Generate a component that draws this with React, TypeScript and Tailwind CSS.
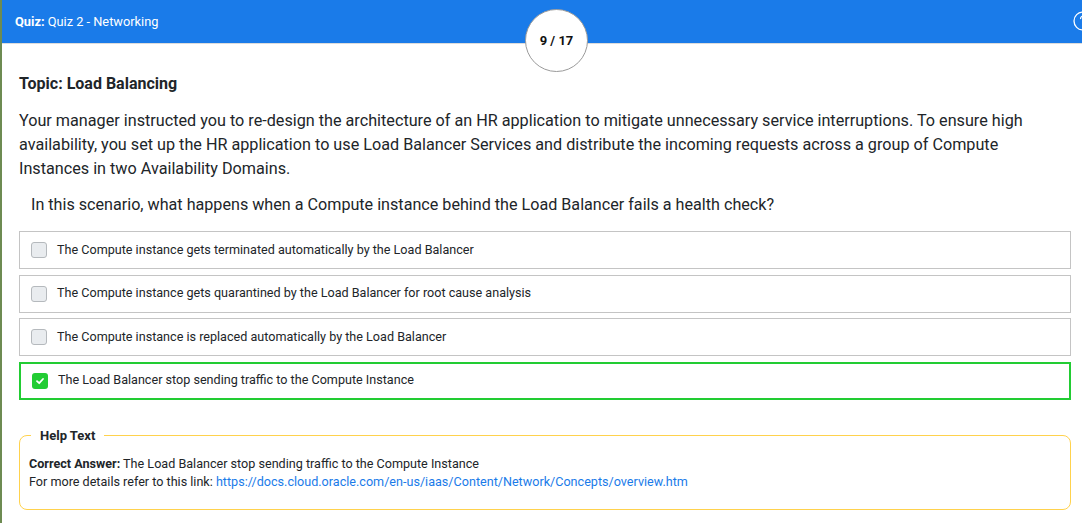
import React from 'react'

const options = [
  { text: 'The Compute instance gets terminated automatically by the Load Balancer', checked: false },
  { text: 'The Compute instance gets quarantined by the Load Balancer for root cause analysis', checked: false },
  { text: 'The Compute instance is replaced automatically by the Load Balancer', checked: false },
  { text: 'The Load Balancer stop sending traffic to the Compute Instance', checked: true },
]

const App: React.FC = () => {
  return (
    <div
      className="h-[523px] w-[1082px] overflow-hidden bg-white border-l-2 border-[#6d8b52] text-[#212529]"
      style={{ fontFamily: 'Roboto, "Liberation Sans", sans-serif' }}
    >
      {/* Header */}
      <div className="relative flex h-[44px] items-center justify-between bg-[#1a7be9] border-b border-[#dcdcdc] pl-[13px] text-[12.8px] text-white">
        <div className="mt-[1px]">
          <span className="font-bold">Quiz:</span> Quiz 2 - Networking
        </div>
        <div className="absolute left-[523px] top-[9px] flex h-[63px] w-[63px] items-center justify-center rounded-full border border-[#9a9a9a] bg-white text-[13px] font-bold text-[#111]">
          9 / 17
        </div>
        <svg className="mr-[-11px] mt-[-1px]" width="20" height="20" viewBox="0 0 20 20" fill="none">
          <circle cx="10" cy="10" r="9" stroke="white" strokeWidth="1.3" />
          <path d="M7.6 7.6 A2.4 2.4 0 1 1 10 10 L10 11.6" stroke="white" strokeWidth="1.3" strokeLinecap="round" />
          <circle cx="10" cy="14.2" r="0.8" fill="white" />
        </svg>
      </div>

      {/* Body */}
      <div className="pl-[17px] pr-[11px]">
        <h2 className="mt-[30px] text-[16px] font-bold leading-[20px]">Topic: Load Balancing</h2>
        <p className="mt-[15px] pr-[24px] text-[16.2px] leading-[24px]">
          Your manager instructed you to re-design the architecture of an HR application to mitigate unnecessary service interruptions. To ensure high availability, you set up the HR application to use Load Balancer Services and distribute the incoming requests across a group of Compute Instances in two Availability Domains.
        </p>
        <p className="mt-[12px] pl-[12px] text-[16.15px] leading-[24px]">
          In this scenario, what happens when a Compute instance behind the Load Balancer fails a health check?
        </p>

        <div className="mt-[14px] flex flex-col gap-[5.5px]">
          {options.map((o) =>
            o.checked ? (
              <div key={o.text} className="flex h-[38px] items-center border-2 border-[#22cc33] pl-[11px] text-[12.6px]">
                <span className="mr-[10px] flex h-[16px] w-[16px] items-center justify-center rounded-[3px] bg-[#22cc33]">
                  <svg width="10" height="10" viewBox="0 0 10 10" fill="none">
                    <path d="M2 5.2 L4.2 7.2 L8 3" stroke="white" strokeWidth="1.8" strokeLinecap="round" strokeLinejoin="round" />
                  </svg>
                </span>
                {o.text}
              </div>
            ) : (
              <div key={o.text} className="flex h-[38px] items-center border border-[#c4c4c4] pl-[11px] text-[12.6px]">
                <span className="mr-[10px] h-[16px] w-[16px] rounded-[3px] border border-[#b5b9bd] bg-[#e9ecef]" />
                {o.text}
              </div>
            )
          )}
        </div>

        {/* Help text */}
        <fieldset className="mt-[26px] h-[84px] rounded-[8px] border border-[#ffd24d] px-[9px] pb-[10px]">
          <legend className="ml-[2px] px-[9px] text-[13px] font-bold">Help Text</legend>
          <div className="mt-[10px] text-[12.6px] leading-[18px]">
            <div>
              <span className="font-bold">Correct Answer:</span> The Load Balancer stop sending traffic to the Compute Instance
            </div>
            <div>
              For more details refer to this link:{' '}
              <a className="text-[#1a7be9]" href="#">
                https://docs.cloud.oracle.com/en-us/iaas/Content/Network/Concepts/overview.htm
              </a>
            </div>
          </div>
        </fieldset>
      </div>
    </div>
  )
}

export default App
